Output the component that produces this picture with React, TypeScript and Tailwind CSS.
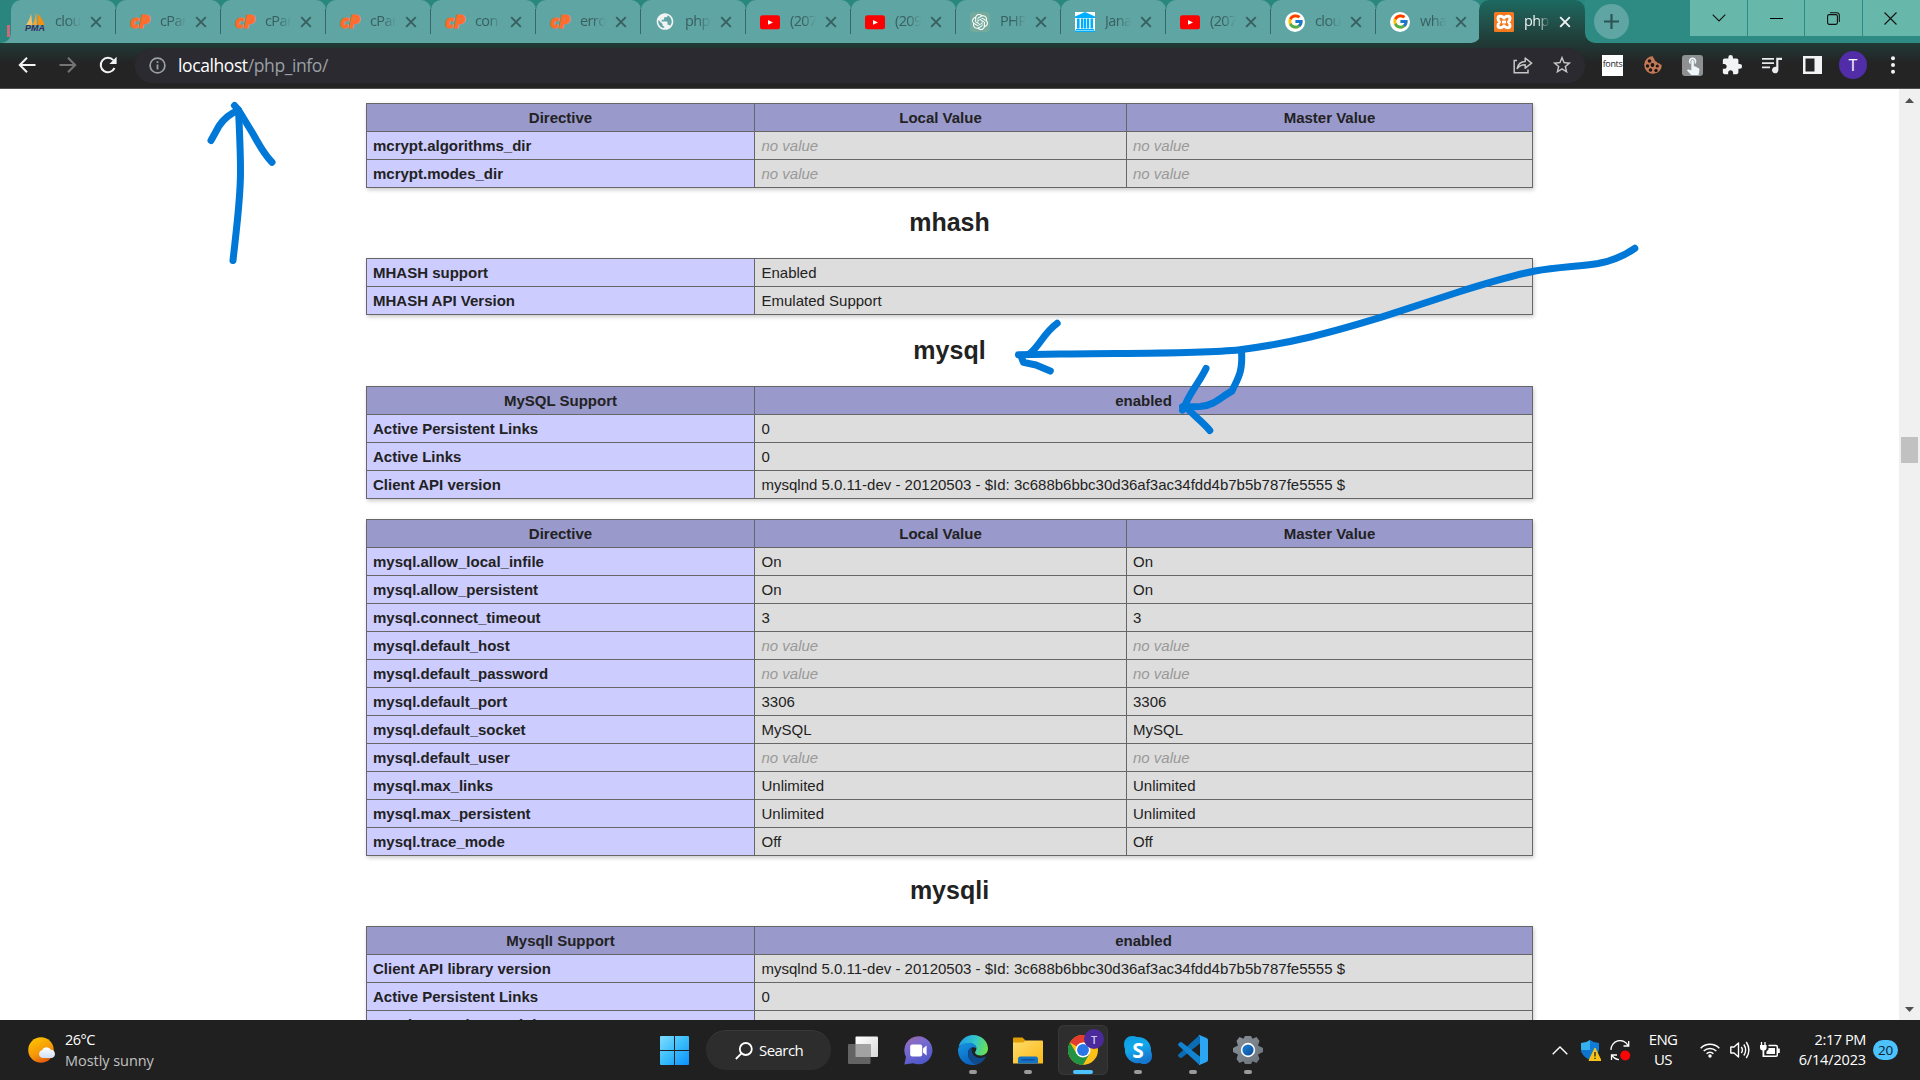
import React from "react";
import { SiOpenai } from "react-icons/si";
import { FcGoogle } from "react-icons/fc";
import { MdExtension, MdPublic, MdTouchApp, MdStarOutline } from "react-icons/md";

const UI = "font-['Open_Sans','Noto_Sans',sans-serif]";

/* ---------- tab favicons ---------- */

const Pma = () => (
  <svg width="20" height="20" viewBox="0 0 20 20" className="overflow-visible">
    <path d="M6 1.5 L7.5 13 H1 C3.5 10 5 6 6 1.5Z" fill="#f3c169" />
    <path d="M11 0 L12 13 H7.5 C9.5 9 10.5 5 11 0Z" fill="#f8a52c" />
    <path d="M12.5 1.5 C16 5 18.5 9 19.5 13 H13Z" fill="#f29111" />
    <text x="0" y="19.3" textLength="20" lengthAdjust="spacingAndGlyphs" fontFamily="Liberation Sans" fontWeight="bold" fontStyle="italic" fontSize="8.5" fill="#33305f">PMA</text>
  </svg>
);
const CP = () => (
  <svg width="20" height="20" viewBox="0 0 20 20" className="overflow-visible">
    <text x="0" y="16" textLength="20" lengthAdjust="spacingAndGlyphs" fontFamily="Open Sans" fontWeight="800" fontStyle="italic" fontSize="18" fill="#ff6c2c" stroke="#ff6c2c" strokeWidth=".9">cP</text>
  </svg>
);
const Globe = () => <MdPublic size={21} color="#f1f3f4" />;
const Yt = () => (
  <svg width="20" height="20" viewBox="0 0 20 20">
    <rect y="3.3" width="20" height="14" rx="2.5" fill="#f00" />
    <path d="M8 8 L13 10.4 L8 12.8Z" fill="#fff" />
  </svg>
);
const Gpt = () => (
  <span className="flex size-5 items-center justify-center rounded bg-[#74aa9c]">
    <SiOpenai size={16} color="#fff" />
  </span>
);
const Bank = () => (
  <svg width="20" height="20" viewBox="0 0 20 20">
    <rect width="20" height="20" fill="#fff" />
    <path d="M0 4.5 L10 0 L20 4.5 V6 H0Z M2 6.5h2.6v10H2z M6 6.5h2.4v10H6z M9 6.5h2.2v10H9z M12 6.5h2.2v10H12z M15.5 6.5h2.6v10h-2.6z M1 17h18v1H1z M0 18.6h20V20H0z" fill="#00aeff" />
  </svg>
);
const Goo = () => (
  <span className="flex size-5 items-center justify-center rounded-full bg-white">
    <FcGoogle size={17} />
  </span>
);
const Xampp = () => (
  <svg width="20" height="20" viewBox="0 0 20 20">
    <rect width="20" height="20" rx="1.5" fill="#f47a20" />
    <g fill="none" stroke="#fff" strokeWidth="2.9" strokeLinejoin="round">
      <path d="M10 6.200Q8.500 4.300 6.200 4.300Q4 4.300 4 6.600Q4 8.500 5.600 10Q4 11.500 4 13.400Q4 15.700 6.200 15.700Q8.500 15.700 10 13.800Q11.500 15.700 13.800 15.700Q16 15.700 16 13.400Q16 11.500 14.400 10Q16 8.500 16 6.600Q16 4.300 13.800 4.300Q11.500 4.300 10 6.200Z" />
      <path d="M8 10H12" />
    </g>
  </svg>
);

const tabs: { icon: React.FC; text: string }[] = [
  { icon: Pma, text: "clou" },
  { icon: CP, text: "cPan" },
  { icon: CP, text: "cPan" },
  { icon: CP, text: "cPan" },
  { icon: CP, text: "con" },
  { icon: CP, text: "erro" },
  { icon: Globe, text: "php" },
  { icon: Yt, text: "(207" },
  { icon: Yt, text: "(209" },
  { icon: Gpt, text: "PHP" },
  { icon: Bank, text: "Jana" },
  { icon: Yt, text: "(207" },
  { icon: Goo, text: "clou" },
  { icon: Goo, text: "wha" },
];

const Cross = ({ color }: { color: string }) => (
  <svg width="12" height="12" viewBox="0 0 12 12" className="shrink-0">
    <path d="M1.2 1.2 L10.8 10.8 M10.8 1.2 L1.2 10.8" stroke={color} strokeWidth="1.9" />
  </svg>
);

const TabBody = ({ icon: Icon, text, color }: { icon: React.FC; text: string; color: string }) => (
  <>
    <span className="flex w-5 shrink-0 justify-center"><Icon /></span>
    <span
      className="-mt-[2px] ml-[10px] w-[26px] shrink-0 overflow-hidden whitespace-nowrap text-[14.5px] leading-5 tracking-[-0.6px] [mask-image:linear-gradient(to_right,black_50%,transparent)]"
      style={{ color }}
    >
      {text}
    </span>
    <span className="ml-[9px] flex"><Cross color={color} /></span>
  </>
);

const TabStrip = () => (
  <div className={`flex h-[43px] bg-[linear-gradient(#2a877f_22px,#203a36_22px)] ${UI}`}>
    <div className="flex w-[1479px] shrink-0 rounded-br-[10px] bg-[linear-gradient(#2a877f_22px,#5fa5a3_22px)]">
      <div className="flex w-[10.5px] shrink-0 items-end rounded-br-[10px] bg-[#2a857f]">
        <span className="mb-[6px] ml-[7px] h-3 w-[3px] bg-[#c86a78]" />
      </div>
      {tabs.map((t, i) => (
        <div
          key={i}
          className={`flex w-[105px] shrink-0 items-center rounded-t-[10px] bg-[#5fa5a3] pl-[14.5px] ${i === 13 ? "rounded-br-[10px]" : ""}`}
        >
          <TabBody icon={t.icon} text={t.text} color="#38605f" />
          {i < 13 && <span className="-mr-[0.5px] ml-auto h-[25px] w-px bg-[#3a6765]" />}
        </div>
      ))}
    </div>
    <div className="flex w-[106px] shrink-0 items-center rounded-t-[10px] bg-linear-to-b from-[#1b6a61] to-[#203a36] pl-[15px]">
      <TabBody icon={Xampp} text="php" color="#f1f3f4" />
    </div>
    <div className="flex flex-1 items-start rounded-bl-[10px] bg-[#2e8b83] pl-[9px]">
      <span className="mt-1 flex size-[35px] items-center justify-center rounded-full bg-[#5fa5a3]">
        <svg width="15" height="15" viewBox="0 0 15 15"><path d="M7.5 0V15M0 7.5H15" stroke="#2d5554" strokeWidth="2.2" /></svg>
      </span>
      <div className="ml-auto flex h-9 gap-px">
        <span className="flex w-[57px] items-center justify-center bg-[#67b8aa]">
          <svg width="14" height="8" viewBox="0 0 14 8"><path d="M.7 .7 L7 7 L13.3 .7" fill="none" stroke="#111" strokeWidth="1.1" /></svg>
        </span>
        <span className="flex w-[56px] items-center justify-center bg-[#67b8aa]">
          <span className="h-px w-[13px] bg-black" />
        </span>
        <span className="flex w-[57px] items-center justify-center bg-[#67b8aa]">
          <svg width="13" height="13" viewBox="0 0 13 13" fill="none" stroke="#111" strokeWidth="1.1"><rect x=".6" y="2.6" width="9.8" height="9.8" rx="1.6" /><path d="M3 .7H9.8A2.5 2.5 0 0 1 12.3 3.2V10" /></svg>
        </span>
        <span className="flex w-[57px] items-center justify-center bg-[#67b8aa] pr-[2px]">
          <svg width="13" height="13" viewBox="0 0 13 13"><path d="M.5 .5L12.5 12.5M12.5 .5L.5 12.5" stroke="#111" strokeWidth="1.1" /></svg>
        </span>
      </div>
    </div>
  </div>
);

const Cookie = () => (
  <svg className="ml-[20px]" width="20" height="20" viewBox="0 0 20 20">
    <path d="M10.500 .8A9.200 9.200 0 1 0 19.200 9.500Q17.500 9.800 16.500 8Q14.500 8.500 13.500 6.300Q11.500 6 11.800 4Q10 2.800 10.500 .8Z" fill="#c17a58" stroke="#1a1414" strokeWidth=".6" />
    <g fill="#1d1613"><circle cx="6.500" cy="6" r="1.800" /><circle cx="4.500" cy="11" r="1.700" /><circle cx="9.500" cy="10" r="1.900" /><circle cx="7.500" cy="15" r="1.800" /><circle cx="13" cy="15.500" r="1.700" /><circle cx="14.300" cy="11" r="1.600" /></g>
  </svg>
);

const Toolbar = () => (
  <div className="flex h-[46px] items-center border-b border-[#505053] bg-[linear-gradient(#203a36,#242424_20px)] pb-[1px]">
    <svg className="ml-[18px]" width="18" height="18" viewBox="0 0 18 18" fill="none" stroke="#f1f3f4" strokeWidth="2"><path d="M17.5 9H2.5M9 1.8L1.8 9L9 16.2" /></svg>
    <svg className="ml-[23px]" width="18" height="18" viewBox="0 0 18 18" fill="none" stroke="#747474" strokeWidth="2"><path d="M.5 9H15.5M9 1.8L16.2 9L9 16.2" /></svg>
    <svg className="ml-[22px]" width="18" height="18" viewBox="0 0 18 18"><path d="M15.5 12A7.2 7.2 0 1 1 14.3 4.2" fill="none" stroke="#f1f3f4" strokeWidth="2" /><path d="M17.6 .8V8H10.4Z" fill="#f1f3f4" /></svg>
    <div className={`ml-[18px] flex h-[35px] w-[1450px] shrink-0 items-center rounded-full bg-[#2b2a30] pl-[14px] pr-[12px] ${UI}`}>
      <svg width="17" height="17" viewBox="0 0 17 17" fill="none" stroke="#9aa0a6"><circle cx="8.5" cy="8.5" r="7.4" strokeWidth="1.7" /><path d="M8.5 7.5V12.6M8.5 4.3V6" strokeWidth="1.8" /></svg>
      <span className="ml-3 text-[17.5px] leading-6 tracking-[-0.4px] text-[#9aa0a6]"><span className="text-white">localhost</span>/php_info/</span>
      <svg className="ml-auto" width="20" height="18" viewBox="0 0 20 18" fill="none" stroke="#c4c7c5" strokeWidth="1.5"><path d="M4 4.5H1.2V16.8H15V13.5" /><path d="M4.2 12.5C5 8 8 5.8 12.2 5.6V2L18.6 7.2L12.2 12.2V8.8C8.8 8.8 6.3 9.8 4.2 12.5Z" strokeLinejoin="round" /></svg>
      <MdStarOutline className="ml-[18px]" size={22} color="#c4c7c5" />
    </div>
    <span className={`ml-[17px] flex h-[21px] w-[21px] items-start justify-center bg-white text-[9px] leading-[18px] tracking-[-0.35px] text-[#222] ${UI}`}>fonts</span>
    <Cookie />
    <span className="ml-[19px] flex size-[21px] items-center justify-center rounded-[3px] bg-[#8e9091]"><MdTouchApp size={20} color="#eef6fa" /></span>
    <MdExtension className="ml-[18px]" size={22} color="#f1f3f4" />
    <svg className="ml-[19px]" width="20" height="17" viewBox="0 0 20 17" fill="#e8eaed"><path d="M0 1h12v1.8H0zM0 5.2h12V7H0zM0 9.4h8v1.8H0z" /><path d="M14.2 .8H20V3H16.4V13A3.2 3.2 0 1 1 14.2 10Z" /></svg>
    <svg className="ml-[21px]" width="19" height="18" viewBox="0 0 19 18"><path fillRule="evenodd" d="M0 0H19V18H0ZM2.5 2.5V15.5H11.5V2.5Z" fill="#f1f3f4" /></svg>
    <span className={`ml-[17px] flex size-7 items-center justify-center rounded-full bg-[#512da8] text-[16px] leading-none text-white ${UI}`}>T</span>
    <svg className="ml-[23.5px]" width="4" height="18" viewBox="0 0 4 18" fill="#f1f3f4"><circle cx="2" cy="2.2" r="2" /><circle cx="2" cy="9" r="2" /><circle cx="2" cy="15.8" r="2" /></svg>
  </div>
);

/* ---------- phpinfo content ---------- */

const Value = ({ v }: { v: string }) => (v === "" ? <i className="text-[#999]">no value</i> : <>{v}</>);

const Table = ({ head, rows }: { head?: string[]; rows: string[][] }) => (
  <div className="w-[1167px] shrink-0 border-x border-t border-[#666] text-[15px] leading-[27px] shadow-[1px_2px_4px_#ccc]">
    {head && (
      <div className="flex h-7 border-b border-[#666] bg-[#9999cc] text-center font-bold">
        <span className="w-[388px] shrink-0 border-r border-[#666]">{head[0]}</span>
        {head.length === 3 && <span className="w-[372px] shrink-0 border-r border-[#666]">{head[1]}</span>}
        <span className="flex-1">{head[head.length - 1]}</span>
      </div>
    )}
    {rows.map((r, i) => (
      <div key={i} className="flex h-7 border-b border-[#666] bg-[#dddddd]">
        <span className="w-[388px] shrink-0 border-r border-[#666] bg-[#ccccff] pl-[6px] font-bold">{r[0]}</span>
        {r.length === 3 && <span className="w-[372px] shrink-0 border-r border-[#666] pl-[6.5px]"><Value v={r[1]} /></span>}
        <span className={r.length === 3 ? "flex-1 pl-[6px]" : "flex-1 pl-[6.5px]"}><Value v={r[r.length - 1]} /></span>
      </div>
    ))}
  </div>
);

const Heading = ({ children }: { children: string }) => (
  <h2 className="flex h-[70px] shrink-0 items-center justify-center pb-px text-[25px] leading-[29px] font-bold">{children}</h2>
);

const DIRECTIVE = ["Directive", "Local Value", "Master Value"];
const CLIENT = "mysqlnd 5.0.11-dev - 20120503 - $Id: 3c688b6bbc30d36af3ac34fdd4b7b5b787fe5555 $";

const Page = () => (
  <div className="flex h-[931px] overflow-hidden bg-white">
    <div className="flex flex-1 flex-col items-center overflow-hidden pt-[14px] font-['Liberation_Sans',Arial,sans-serif] text-[#222]">
      <Table head={DIRECTIVE} rows={[["mcrypt.algorithms_dir", "", ""], ["mcrypt.modes_dir", "", ""]]} />
      <Heading>mhash</Heading>
      <Table rows={[["MHASH support", "Enabled"], ["MHASH API Version", "Emulated Support"]]} />
      <div className="h-px shrink-0" />
      <Heading>mysql</Heading>
      <Table head={["MySQL Support", "enabled"]} rows={[["Active Persistent Links", "0"], ["Active Links", "0"], ["Client API version", CLIENT]]} />
      <div className="h-5 shrink-0" />
      <Table
        head={DIRECTIVE}
        rows={[
          ["mysql.allow_local_infile", "On", "On"],
          ["mysql.allow_persistent", "On", "On"],
          ["mysql.connect_timeout", "3", "3"],
          ["mysql.default_host", "", ""],
          ["mysql.default_password", "", ""],
          ["mysql.default_port", "3306", "3306"],
          ["mysql.default_socket", "MySQL", "MySQL"],
          ["mysql.default_user", "", ""],
          ["mysql.max_links", "Unlimited", "Unlimited"],
          ["mysql.max_persistent", "Unlimited", "Unlimited"],
          ["mysql.trace_mode", "Off", "Off"],
        ]}
      />
      <Heading>mysqli</Heading>
      <Table head={["MysqlI Support", "enabled"]} rows={[["Client API library version", CLIENT], ["Active Persistent Links", "0"], ["Inactive Persistent Links", "0"]]} />
    </div>
    <div className="flex w-[21px] shrink-0 flex-col items-center bg-[#f0f0f0]">
      <svg className="mt-[9px] shrink-0" width="9" height="5" viewBox="0 0 9 5"><path d="M4.5 0L9 5H0Z" fill="#505050" /></svg>
      <span className="mt-[334px] h-[26px] w-[17px] shrink-0 bg-[#c1c1c1]" />
      <svg className="mt-auto mb-[8px] shrink-0" width="9" height="5" viewBox="0 0 9 5"><path d="M4.5 5L9 0H0Z" fill="#505050" /></svg>
    </div>
  </div>
);

/* ---------- hand-drawn arrows laid over the page ---------- */

const Ink = () => (
  <svg className="pointer-events-none absolute top-0 left-0" width="1920" height="1080" viewBox="0 0 1920 1080" fill="none" stroke="#0078d7" strokeWidth="7" strokeLinecap="round" strokeLinejoin="round">
    <path d="M234.5 105.5L238.5 110C239.5 130 240.5 150 240.5 172C240.5 200 236 232 233 260.5" />
    <path d="M238 110.5C229 114 223 120 219 126L211 140.5M238.5 110L252.5 133C260 146 263 153 272 162.3" />
    <path d="M1634.8 248.3C1624 256 1612 261 1598 263.5C1578 266.5 1557 267 1535 271C1510 276 1484 284 1457 292.5L1383 316.7C1330 333 1290 343.5 1240 349.7C1200 354 1130 353 1060 354L1018.5 354.7" />
    <path d="M1057.2 323.3C1043 334 1041 344 1030 353.5M1021 356L1023.4 362.3L1036 365L1050.3 371" />
    <path d="M1241.5 351C1243 372 1238 378 1232 391C1222 396 1214 406 1200 406.5L1182.5 406.7" />
    <path d="M1206 368.5C1200 381 1192 390 1186 403L1182.5 410M1186 407C1193 415 1203 422 1209.8 430.5" />
  </svg>
);

/* ---------- taskbar ---------- */

const TaskApp = ({ children, active, mark = true }: { children: React.ReactNode; active?: boolean; mark?: boolean }) => (
  <div className="flex w-[55px] shrink-0 justify-center">
    <div className={`flex h-[50px] w-[50px] flex-col items-center rounded-md pt-[10px] ${active ? "bg-[#2e2e2e] ring-1 ring-[#383838] ring-inset" : ""}`}>
      <span className="flex size-[30px] shrink-0 items-center justify-center">{children}</span>
      {mark && <span className={`mt-[5px] h-1 rounded-full ${active ? "w-5 bg-[#4cc2ff]" : "w-2 bg-[#9a9a9a]"}`} />}
    </div>
  </div>
);

const Weather = () => (
  <svg width="28" height="28" viewBox="0 0 28 28">
    <defs>
      <linearGradient id="sun" x1=".2" y1="0" x2=".7" y2="1"><stop stopColor="#fcc500" /><stop offset=".6" stopColor="#f59509" /><stop offset="1" stopColor="#e0540c" /></linearGradient>
      <linearGradient id="cloud" x1="0" y1="0" x2="0" y2="1"><stop stopColor="#fff" /><stop offset="1" stopColor="#cfe0fa" /></linearGradient>
    </defs>
    <circle cx="13" cy="14" r="12.8" fill="url(#sun)" />
    <path d="M14.5 22A4 4 0 0 1 14 14.2A5 5 0 0 1 23 13.8A4.2 4.2 0 0 1 24 22Z" fill="url(#cloud)" />
  </svg>
);

const Chat = () => (
  <svg width="29" height="29" viewBox="0 0 29 29">
    <defs><linearGradient id="chat" x1="0" y1="0" x2=".5" y2="1"><stop stopColor="#a06a9c" /><stop offset=".4" stopColor="#7b6ad0" /><stop offset="1" stopColor="#5059c9" /></linearGradient></defs>
    <path d="M14.5 .3A14 14 0 1 1 9 27.2L.3 28.5L2 21A14 14 0 0 1 14.5 .3Z" fill="url(#chat)" />
    <rect x="6.2" y="8.5" width="12" height="12" rx="2" fill="#fff" />
    <path d="M19 12.6L22.6 9.6V19.4L19 16.4Z" fill="#fff" />
  </svg>
);

const Edge = () => (
  <svg width="30" height="30" viewBox="0 0 30 30">
    <defs>
      <linearGradient id="edgeA" x1="0" y1=".3" x2="1" y2=".5"><stop stopColor="#1e9de8" /><stop offset=".55" stopColor="#35c6c8" /><stop offset="1" stopColor="#6be24f" /></linearGradient>
      <linearGradient id="edgeB" x1=".2" y1="0" x2=".6" y2="1"><stop stopColor="#1591e0" /><stop offset="1" stopColor="#0b62bd" /></linearGradient>
    </defs>
    <path d="M.6 12C2 5 8 0 15 0C24 0 30 6.500 30 13.500C30 18 26.500 20.500 22.500 20.500C19 20.500 17 19 17 17.500C17 16.500 18.400 16 18.400 13.500C18.400 10.500 15.500 8.500 12 8.500C7 8.500 2.500 10 .6 12Z" fill="url(#edgeA)" />
    <path d="M0 15C0 11 5 7.800 10.500 7.800C15.500 7.800 18.400 10.500 18.400 13.300C14 10.500 10 14 10 18.500C10 24.500 15 29 19.500 29.200C9 32.500 0 25.500 0 15Z" fill="url(#edgeB)" />
    <path d="M10 18.500C10 15.500 11.500 13.200 14 12.600C12.600 18 16.500 23 22 23C24.500 23 26.300 22.300 28 21.300C26 26 22.500 29 18.800 29.400C14 28.500 10 24.500 10 18.500Z" fill="#114a8b" />
  </svg>
);

const Explorer = () => (
  <svg width="30" height="27" viewBox="0 0 30 27">
    <defs><linearGradient id="fold" x1="0" y1="0" x2="1" y2="1"><stop stopColor="#ffdc6b" /><stop offset="1" stopColor="#fbb915" /></linearGradient></defs>
    <path d="M0 1.500Q0 .5 1 .5H9.500L13 4V10H0Z" fill="#e19d04" />
    <path d="M0 5.500H10L13 3.500H29Q30 3.500 30 4.500V26.500H0Z" fill="url(#fold)" />
    <path d="M5 26.500V22Q5 19.500 7.500 19.500H22.500Q25 19.500 25 22V26.500Z" fill="#1473c5" />
    <path d="M8.500 22.800H21.500" stroke="#0b4a8c" strokeWidth="1.200" />
  </svg>
);

const Chrome = () => (
  <span className="relative flex">
    <svg width="30" height="30" viewBox="0 0 48 48">
      <circle cx="24" cy="24" r="24" fill="#fbc116" />
      <path d="M24 24L3.200 12A24 24 0 0 1 44.800 12H24Z" fill="#e33b2e" />
      <path d="M3.200 12A24 24 0 0 0 24 48L34.400 30L24 24L13.600 30Z" fill="#229342" />
      <circle cx="24" cy="24" r="12" fill="#fff" />
      <circle cx="24" cy="24" r="9.500" fill="#2a76e8" />
    </svg>
    <span className="absolute -top-[6px] left-4 flex size-5 items-center justify-center rounded-full bg-[#4b2a9c] text-[11px] leading-none font-semibold text-[#cfc4ec]">T</span>
  </span>
);

const Skype = () => (
  <svg width="28" height="28" viewBox="0 0 28 28">
    <defs><linearGradient id="sky" x1="0" y1="0" x2=".4" y2="1"><stop stopColor="#0c9be0" /><stop offset=".5" stopColor="#12a8ec" /><stop offset="1" stopColor="#1677cf" /></linearGradient></defs>
    <path d="M8 0Q11 0 13 1A13 13 0 0 1 27 15Q28 17.500 28 20A8 8 0 0 1 16 27.100A13 13 0 0 1 1 13Q0 11 0 8A8 8 0 0 1 8 0Z" fill="url(#sky)" />
    <text x="14" y="21.500" textAnchor="middle" fontFamily="Open Sans" fontWeight="bold" fontSize="21" fill="#fff">S</text>
  </svg>
);

const Code = () => (
  <svg width="30" height="30" viewBox="0 0 30 30">
    <path d="M21.500 0L22.500 8L3.800 22.700Q2.800 23.300 2 22.700L.4 21.200Q-.4 20.300 .4 19.400Z" fill="#0a6cb5" />
    <path d="M21.500 30L22.500 22L3.800 7.300Q2.800 6.700 2 7.300L.4 8.800Q-.4 9.700 .4 10.600Z" fill="#1283d0" />
    <path d="M21.500 0L28.500 3Q30 3.700 30 5V25Q30 26.300 28.500 27L21.500 30Q20 29.500 22 28V2Q20 .5 21.500 0Z" fill="#2ba6f5" />
  </svg>
);

const Gear = () => (
  <svg width="30" height="30" viewBox="0 0 30 30">
    <defs>
      <linearGradient id="gear" x1="0" y1="0" x2="1" y2="1"><stop stopColor="#8a9199" /><stop offset="1" stopColor="#69717a" /></linearGradient>
      <linearGradient id="hub" x1="0" y1="0" x2="1" y2="1"><stop stopColor="#1d83da" /><stop offset="1" stopColor="#0a4c94" /></linearGradient>
    </defs>
    <path d="M6.500 2L10.500 3.800L12 1H18L19.500 3.800L23.500 2L26.500 6L25 10.500L30 13V17L25 19.500L26.500 24L23.500 28L19.500 26.200L18 29H12L10.500 26.200L6.500 28L3.500 24L5 19.500L0 17V13L5 10.500L3.500 6Z" fill="url(#gear)" />
    <circle cx="15" cy="15" r="7.200" fill="#fff" />
    <circle cx="15" cy="15" r="5.600" fill="url(#hub)" />
  </svg>
);

const Taskbar = () => (
  <div className={`flex h-[60px] items-center bg-[#202020] text-[15px] text-white ${UI}`}>
    <div className="flex w-[646px] shrink-0 items-center pl-7">
      <Weather />
      <div className="ml-[9px] text-[14.5px] leading-[21px] tracking-[-0.05px]">
        <div className="tracking-[-0.5px]">26°C</div>
        <div className="text-[#c2c2c2]">Mostly sunny</div>
      </div>
    </div>
    <svg className="ml-[14px] shrink-0" width="29" height="29" viewBox="0 0 29 29">
      <defs><linearGradient id="win" x1="0" y1="0" x2="1" y2="1"><stop stopColor="#7fdcff" /><stop offset=".5" stopColor="#39bdfb" /><stop offset="1" stopColor="#0a90fb" /></linearGradient></defs>
      <path d="M0 1Q0 0 1 0H14V14H0ZM15 0H28Q29 0 29 1V14H15ZM0 15H14V29H1Q0 29 0 28ZM15 15H29V28Q29 29 28 29H15Z" fill="url(#win)" />
    </svg>
    <div className="ml-[17px] flex h-10 w-[125px] shrink-0 items-center rounded-full border-t border-[#3a3a3a] bg-[#2d2d2d] pl-[29px]">
      <svg width="18" height="18" viewBox="0 0 18 18" fill="none" stroke="#fff" strokeWidth="1.800"><circle cx="10.800" cy="7" r="6" /><path d="M6.500 11.300L.8 17" /></svg>
      <span className="ml-[6px] text-[15px] tracking-[-0.55px]">Search</span>
    </div>
    <div className="ml-[4.5px] flex">
      <TaskApp mark={false}>
        <svg width="30" height="29" viewBox="0 0 30 29">
          <defs><linearGradient id="tv" x1="0" y1="0" x2="1" y2="1"><stop stopColor="#fff" /><stop offset="1" stopColor="#d9d9d9" /></linearGradient></defs>
          <rect x="7.500" y=".5" width="22.500" height="20.500" rx="1" fill="url(#tv)" />
          <rect y="8" width="22.500" height="20" rx="1" fill="#636363" />
          <rect x="7.500" y="8" width="15" height="13" fill="#a2a2a2" />
        </svg>
      </TaskApp>
      <TaskApp mark={false}><Chat /></TaskApp>
      <TaskApp><Edge /></TaskApp>
      <TaskApp><Explorer /></TaskApp>
      <TaskApp active><Chrome /></TaskApp>
      <TaskApp><Skype /></TaskApp>
      <TaskApp><Code /></TaskApp>
      <TaskApp><Gear /></TaskApp>
    </div>
    <div className="ml-auto flex items-center">
      <svg width="16" height="9" viewBox="0 0 16 9"><path d="M.7 8.300L8 1L15.300 8.300" fill="none" stroke="#fff" strokeWidth="1.400" /></svg>
      <svg className="ml-[13px]" width="20" height="21" viewBox="0 0 20 21">
        <path d="M0 3Q5 3 9 0V20Q0 15 0 9Z" fill="#35b1ee" /><path d="M9 0Q13 3 18 3V9Q18 15 9 20Z" fill="#0f7bd6" /><path d="M0 10H9V20Q1 16 0 10Z" fill="#0f74cc" />
        <path d="M14 8L20 20.500H8Z" fill="#fcc419" stroke="#fcc419" strokeLinejoin="round" /><path d="M14 12V16.500M14 17.700V19" stroke="#222" strokeWidth="1.300" />
      </svg>
      <svg className="ml-[9px]" width="21" height="21" viewBox="0 0 21 21" fill="none" stroke="#fff" strokeWidth="1.300"><path d="M1 10A9 9 0 0 1 18 5.500M18.700 1V6H13.500M1.500 20V15H7M2 15.500Q5 19.500 9 19.700" /><circle cx="15.200" cy="15.500" r="5" fill="#fb0505" stroke="none" /></svg>
      <div className="-mt-[2px] ml-[15px] w-[34px] text-center text-[15px] leading-5 tracking-[-0.7px]"><div>ENG</div><div>US</div></div>
      <svg className="ml-[20px]" width="20" height="16" viewBox="0 0 20 16" fill="none" stroke="#fff" strokeWidth="1.500"><path d="M.7 6.200A13 13 0 0 1 19.300 6.200M3.700 9A9 9 0 0 1 16.300 9M6.600 11.700A5 5 0 0 1 13.400 11.700" /><circle cx="10" cy="14" r="1.700" fill="#fff" stroke="none" /></svg>
      <svg className="ml-[10px]" width="20" height="18" viewBox="0 0 20 18" fill="none" stroke="#fff" strokeWidth="1.400"><path d="M.8 6V12H4L8.500 16V2L4 6ZM11.300 6Q13.500 9 11.300 12M13.800 3.500Q17.500 9 13.800 14.500M16.300 1Q21.500 9 16.300 17" strokeLinejoin="round" /></svg>
      <svg className="ml-[10px]" width="20" height="18" viewBox="0 0 20 18"><path d="M1.500 1V5M5 1V5" stroke="#fff" strokeWidth="1.300" /><path d="M0 4H6.600V7Q6.600 9 4.300 9.500V16H2.500V9.500Q0 9 0 7Z" fill="#fff" /><path d="M8.500 4.500H16Q17.300 4.500 17.300 6V14Q17.300 15.300 16 15.300H4" fill="none" stroke="#fff" strokeWidth="1.500" /><path d="M8.500 7H15V13H6.500V10.500L8.500 8.500ZM18 7.500H19.800V12H18Z" fill="#fff" /></svg>
      <div className="ml-[10px] w-[76px] text-right text-[14.5px] leading-5 whitespace-nowrap">
        <div className="-ml-4 tracking-[-0.4px]">2:17 PM</div><div className="-ml-4 tracking-[-0.15px]">6/14/2023</div>
      </div>
      <span className="mr-[22px] ml-[7px] flex h-5 w-[25px] items-center justify-center rounded-full bg-[#4cc2ff] pt-px text-[13.5px] leading-none tracking-[-0.3px] text-[#10202c]">20</span>
    </div>
  </div>
);

export default function App() {
  return (
    <div className="relative flex h-[1080px] w-[1920px] flex-col overflow-hidden bg-white">
      <TabStrip />
      <Toolbar />
      <Page />
      <Taskbar />
      <Ink />
    </div>
  );
}
